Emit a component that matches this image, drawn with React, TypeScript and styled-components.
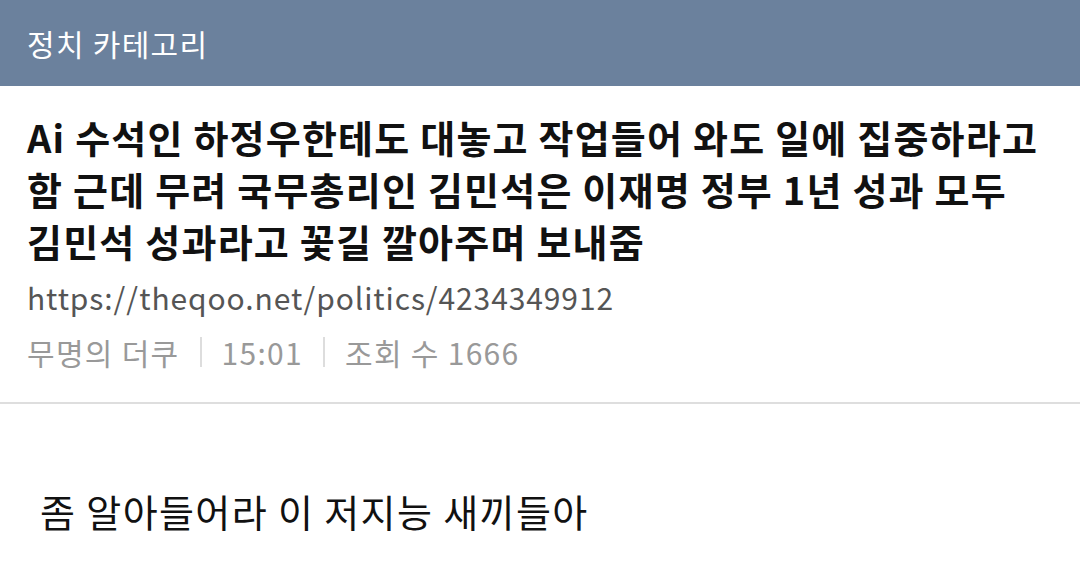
import styled, { createGlobalStyle } from "styled-components";

const GlobalStyle = createGlobalStyle`
  html, body {
    margin: 0;
    padding: 0;
    background: #ffffff;
  }
  body {
    font-family: "Noto Sans CJK KR", "Noto Sans", sans-serif;
  }
`;

const Page = styled.div`
  width: 1080px;
  height: 587px;
  overflow: hidden;
  background: #ffffff;
`;

const CategoryBar = styled.header`
  height: 86px;
  background: #6b819d;
  display: flex;
  align-items: center;
  padding: 0 27px;
  box-sizing: border-box;
  color: #ffffff;
  font-size: 30px;
  font-weight: 400;
  letter-spacing: 1.3px;
`;

const PostHeader = styled.section`
  padding: 25px 27px 30px;
  border-bottom: 2px solid #dedede;
`;

const Title = styled.h1`
  margin: 0;
  font-size: 38px;
  line-height: 52px;
  font-weight: 700;
  color: #111111;
  letter-spacing: 1.2px;
`;

const Link = styled.div`
  margin-top: 10px;
  font-size: 30px;
  line-height: 40px;
  color: #555555;
  letter-spacing: 0.9px;
`;

const Meta = styled.div`
  margin-top: 15px;
  display: flex;
  align-items: center;
  font-size: 30px;
  line-height: 40px;
  color: #999999;
  letter-spacing: 1.3px;
`;

const Divider = styled.span`
  display: inline-block;
  width: 2px;
  height: 30px;
  background: #dddddd;
  margin: 0 20px;
`;

const Body = styled.article`
  padding: 82px 40px 0;
  font-size: 38px;
  line-height: 50px;
  color: #111111;
  letter-spacing: 1.4px;
`;

export default function App() {
  return (
    <Page>
      <GlobalStyle />
      <CategoryBar>정치 카테고리</CategoryBar>
      <PostHeader>
        <Title>
          Ai 수석인 하정우한테도 대놓고 작업들어 와도 일에 집중하라고
          <br />
          함 근데 무려 국무총리인 김민석은 이재명 정부 1년 성과 모두
          <br />
          김민석 성과라고 꽃길 깔아주며 보내줌
        </Title>
        <Link>https://theqoo.net/politics/4234349912</Link>
        <Meta>
          <span>무명의 더쿠</span>
          <Divider />
          <span>15:01</span>
          <Divider />
          <span>조회 수 1666</span>
        </Meta>
      </PostHeader>
      <Body>좀 알아들어라 이 저지능 새끼들아</Body>
    </Page>
  );
}
